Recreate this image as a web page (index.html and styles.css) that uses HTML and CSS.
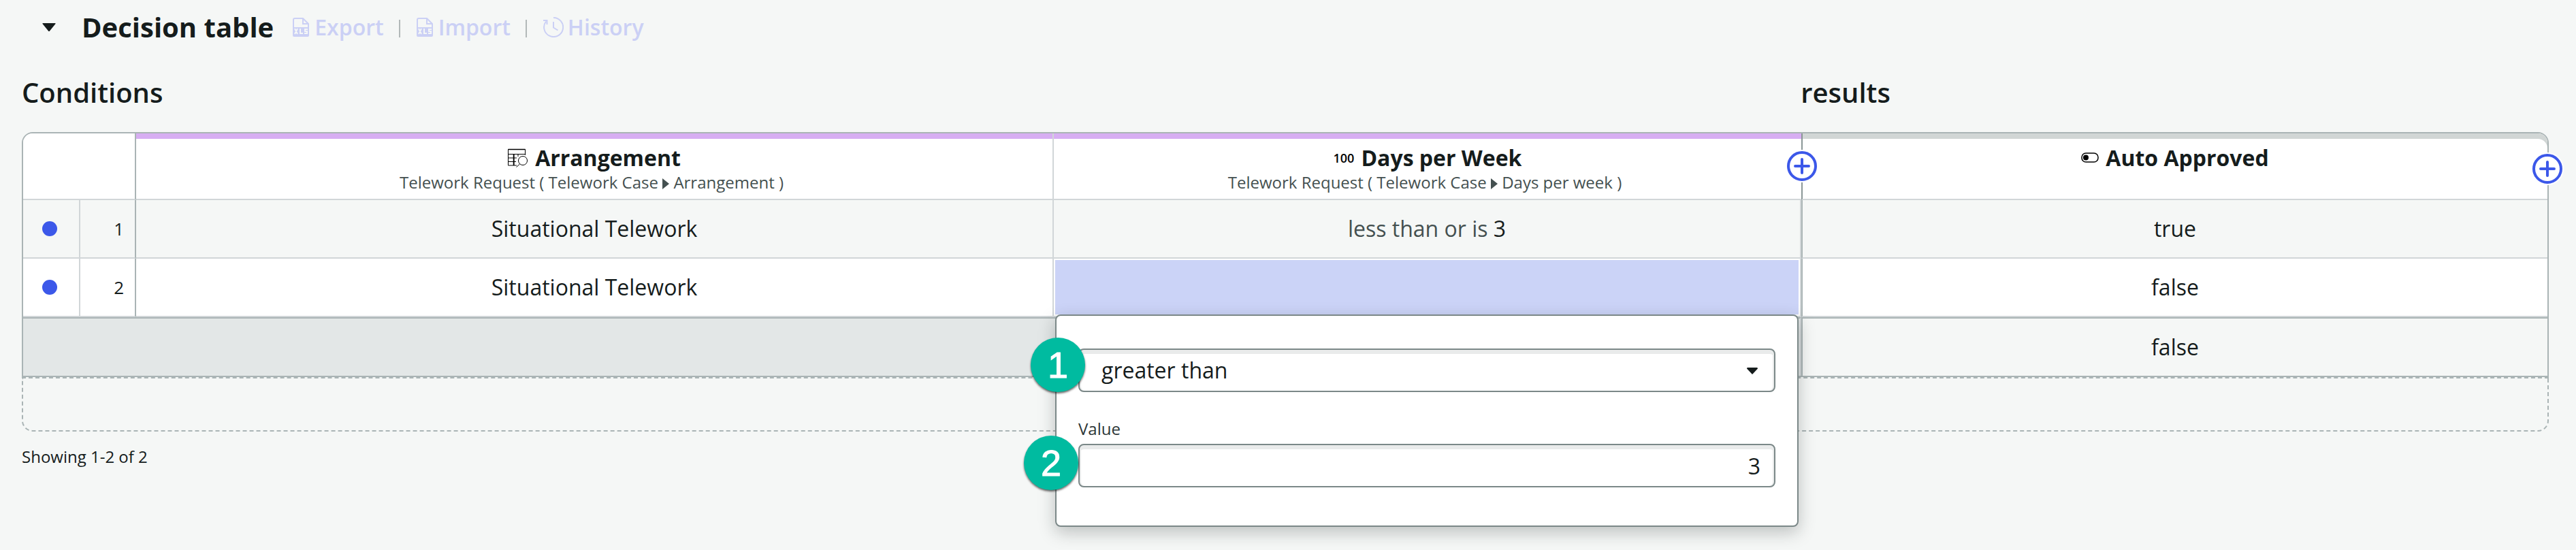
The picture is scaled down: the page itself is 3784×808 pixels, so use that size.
FILE: index.html
```html
<!DOCTYPE html>
<html lang="en">
<head>
<meta charset="utf-8">
<title>Decision table</title>
<link rel="stylesheet" href="styles.css">
</head>
<body>
<svg class="defs" aria-hidden="true">
  <symbol id="xls" viewBox="0 0 24 28">
    <path d="M1 15V3a2 2 0 0 1 2-2h12l8 8v6M15 1v8h8" fill="none" stroke="currentColor" stroke-width="2"/>
    <path d="M0 14h24v12a2 2 0 0 1-2 2H2a2 2 0 0 1-2-2z" fill="currentColor"/>
    <path d="M3 16l4 8M7 16l-4 8M11 16v7h4M22 17h-4v3h3v3h-4" fill="none" stroke="#f5f7f6" stroke-width="2"/>
  </symbol>
  <symbol id="plus" viewBox="0 0 48 48">
    <circle cx="24" cy="24" r="24" fill="#fff"/>
    <circle cx="24" cy="24" r="20" fill="#fff" stroke="currentColor" stroke-width="4"/>
    <path d="M24 14v20M14 24h20" stroke="currentColor" stroke-width="4" stroke-linecap="round"/>
  </symbol>
</svg>
<main class="page">
  <header class="toolbar">
    <button class="toggle" type="button" aria-label="Collapse section" aria-expanded="true">
      <svg width="20" height="12" viewBox="0 0 20 12"><path d="M1 0h18q1 0 .5 1L11 11.500q-1 1-2 0L.5 1Q0 0 1 0z" fill="currentColor"/></svg>
    </button>
    <h1 class="title">Decision table</h1>
    <nav class="actions">
      <a class="action" href="#export"><svg width="24" height="28"><use href="#xls"/></svg>Export</a>
      <span class="divider"></span>
      <a class="action" href="#import"><svg width="24" height="28"><use href="#xls"/></svg>Import</a>
      <span class="divider"></span>
      <a class="action history" href="#history">
        <svg width="30" height="30" viewBox="0 0 30 30"><path d="M15 1A14 14 0 1 1 4 6.500M0 5h5.500v6M15 7v8.500l6.500 4" fill="none" stroke="currentColor" stroke-width="2"/></svg>History</a>
    </nav>
  </header>

  <div class="groups">
    <h2 class="group-title conditions">Conditions</h2>
    <h2 class="group-title">results</h2>
  </div>

  <div class="frame">
    <table class="grid">
      <colgroup><col class="c-dot"><col class="c-num"><col class="c-arr"><col class="c-days"><col></colgroup>
      <thead>
        <tr>
          <th class="corner" colspan="2"></th>
          <th class="head cond line">
            <div class="head-title">
              <svg width="30" height="28" viewBox="0 0 30 28" fill="none" stroke="#000" stroke-width="1"><path d="M13 25H.5V1.500H25.500V10M.5 8.500H25.500M9 8.500V25M.5 14H13M.5 19.500H12M15 8.500V12"/><path d="M.5 1.500H25.500M8.500 9v16" stroke-width="1.500"/><ellipse cx="22" cy="18" rx="6.500" ry="6.500"/><path d="M17.500 23l-5 4.500"/></svg>
              Arrangement
            </div>
            <div class="head-sub">Telework Request ( Telework Case <svg class="step" width="10" height="16" viewBox="0 0 10 16"><path d="M0 0l10 8-10 8z" fill="currentColor"/></svg> Arrangement )</div>
          </th>
          <th class="head cond">
            <div class="head-title"><span class="num-icon">100</span>Days per Week</div>
            <div class="head-sub">Telework Request ( Telework Case <svg class="step" width="10" height="16" viewBox="0 0 10 16"><path d="M0 0l10 8-10 8z" fill="currentColor"/></svg> Days per week )</div>
          </th>
          <th class="head result">
            <div class="head-title">
              <svg width="26" height="28" viewBox="0 0 26 28"><rect x="1" y="7" width="24" height="13" rx="6" fill="none" stroke="#000" stroke-width="1.500"/><circle cx="7" cy="13.500" r="4" fill="#000"/></svg>
              Auto Approved
            </div>
            <button class="add add-condition" type="button" aria-label="Add condition"><svg width="48" height="48"><use href="#plus"/></svg></button>
            <button class="add add-result" type="button" aria-label="Add result"><svg width="48" height="48"><use href="#plus"/></svg></button>
          </th>
        </tr>
      </thead>
      <tbody>
        <tr class="shaded">
          <td class="line"><span class="dot"></span></td>
          <td class="num">1</td>
          <td class="line">Situational Telework</td>
          <td class="line"><span class="operator">less than or is</span> 3</td>
          <td class="out">true</td>
        </tr>
        <tr>
          <td class="line"><span class="dot"></span></td>
          <td class="num">2</td>
          <td class="line">Situational Telework</td>
          <td class="line">
            <div class="selected">
              <form class="editor">
                <div class="field">
                  <select class="control select" aria-label="Operator"><option>greater than</option></select>
                  <svg class="caret" width="16" height="10" viewBox="0 0 16 10"><path d="M1 0h14q1 0 1 1.500L8.500 9.500q-.5.5-1 0L0 1.500Q0 0 1 0z" fill="currentColor"/></svg>
                  <span class="badge badge-one">1</span>
                </div>
                <label class="label" for="value">Value</label>
                <div class="field">
                  <input class="control value" id="value" type="text" value="3">
                  <span class="badge badge-two">2</span>
                </div>
              </form>
            </div>
          </td>
          <td class="out">false</td>
        </tr>
      </tbody>
      <tfoot>
        <tr>
          <td class="line otherwise" colspan="4"></td>
          <td class="out shaded-cell">false</td>
        </tr>
      </tfoot>
    </table>
  </div>
  <div class="dropzone"></div>
  <p class="count">Showing 1-2 of 2</p>
</main>
</body>
</html>
```

FILE: styles.css
```css
* { box-sizing: border-box; }
body {
  margin: 0;
  background: #f5f7f6;
  color: #151c1c;
  font-family: "Open Sans", "Noto Sans", sans-serif;
  font-size: 32px;
  line-height: 44px;
}
.defs { position: absolute; width: 0; height: 0; }
.page { min-height: 100vh; padding: 12px 40px 56px 32px; }

.toolbar { display: flex; align-items: center; height: 56px; padding-left: 30px; }
.toggle { display: flex; padding: 0; border: 0; background: none; color: inherit; }
.title { margin: 0 0 0 38px; font-size: 40px; line-height: 56px; font-weight: 700; }
.actions { display: flex; align-items: center; margin-left: 28px; gap: 22px; font-weight: 600; }
.action { display: flex; align-items: center; gap: 8px; color: #cbd0f5; text-decoration: none; }
.history { gap: 6px; }
.divider { width: 2px; height: 26px; margin: 4px 2px 0 0; background: #b2b8b8; }

.groups { display: flex; margin-top: 40px; }
.group-title { margin: 0; font-size: 40px; line-height: 56px; font-weight: 600; }
.conditions { width: 70.4%; }

.frame { margin-top: 30px; border: 2px solid #aab4b5; border-radius: 16px 16px 0 0; }
.grid { width: 100%; table-layout: fixed; border-collapse: separate; border-spacing: 0; }
.c-dot { width: 84px; }
.c-num { width: 82px; }
.c-arr { width: 36.354%; }
.c-days { width: 29.612%; }
th, td { padding: 0; background: #fff; text-align: center; border-bottom: 2px solid #d1d6d8; }
th { height: 98px; vertical-align: top; }
td { height: 86px; }
.line { border-right: 2px solid #d1d6d8; }
.corner { border-right: 2px solid #aab4b5; border-top-left-radius: 14px; }
.head { position: relative; padding-top: 14px; }
.cond { box-shadow: inset 0 8px #d7aef2; }
.result { border-left: 2px solid #8a9696; border-top-right-radius: 14px; box-shadow: inset 0 8px #d1d6d5; }
.head-title { display: flex; justify-content: center; align-items: center; gap: 10px; line-height: 44px; font-weight: 700; }
.num-icon { font-size: 18px; line-height: 24px; font-weight: 600; color: #000; }
.head-sub { padding-right: 8px; font-size: 24px; line-height: 28px; font-weight: 400; color: #445050; }
.step { vertical-align: -1px; }
.add { position: absolute; z-index: 1; width: 48px; height: 48px; padding: 0; border: 0; background: none; color: #3c58e9; }
.add svg { display: block; }
.add-condition { left: -25px; top: 24px; }
.add-result { right: -24px; top: 28px; }

.shaded td, td.shaded-cell { background: #f5f7f6; }
.dot { display: block; width: 22px; height: 22px; margin: 0 auto 0 28px; border-radius: 50%; background: #3c58e9; }
.num { padding-right: 16px; border-right: 2px solid #aab4b5; text-align: right; font-size: 26px; }
.operator { color: #445050; }
.out { border-left: 2px solid #aab4b5; }
tfoot td { border-top: 2px solid #aab4b5; border-bottom: 0; }
td.otherwise { background: #e3e7e7; }

.selected { position: relative; height: 80px; margin: 2px; background: #cbd3f7; }
.editor {
  position: absolute;
  z-index: 2;
  top: 100%;
  left: 0;
  right: 0;
  padding: 48px 32px 56px;
  background: #fff;
  border: 2px solid #7b8888;
  border-radius: 8px;
  box-shadow: 0 8px 24px rgba(21, 28, 28, .25);
  text-align: left;
}
.field { position: relative; }
.control {
  display: block;
  width: 100%;
  height: 64px;
  border: 2px solid #7b8888;
  border-radius: 8px;
  background: #fff;
  box-shadow: inset 0 6px #e9ebeb, inset 2px 0 #e9ebeb, inset -2px 0 #e9ebeb;
  color: inherit;
  font: inherit;
}
.select { appearance: none; padding: 0 32px; }
.value { padding: 0 20px; text-align: right; }
.caret { position: absolute; right: 26px; top: 28px; }
.label { display: block; margin: 38px 0 6px; font-size: 24px; line-height: 32px; color: #2c3636; }
.badge {
  position: absolute;
  width: 80px;
  height: 80px;
  border-radius: 50%;
  background: #00bba0;
  box-shadow: 0 2px 3px rgba(0, 0, 0, .6);
  color: #fff;
  font: 54px/80px "Liberation Sans", Arial, sans-serif;
  -webkit-text-stroke: 1px #fff;
  text-align: center;
}
.badge-one { left: -70px; top: -16px; }
.badge-two { left: -80px; top: -12px; }

.dropzone { height: 80px; border: 2px dashed #aab4b5; border-radius: 0 0 16px 16px; }
.count { margin: 20px 0 0; font-size: 24px; line-height: 34px; }
```
